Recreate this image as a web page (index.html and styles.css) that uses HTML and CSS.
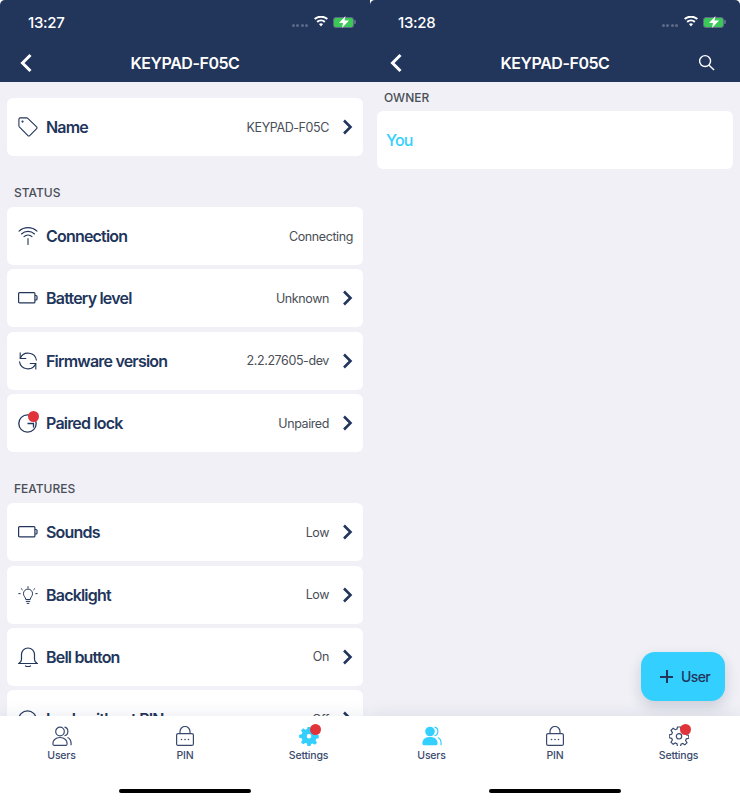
FILE: index.html
```html
<!DOCTYPE html>
<html lang="en">
<head>
    <meta charset="UTF-8">
    <meta name="viewport" content="width=device-width, initial-scale=1.0">
    <title>KEYPAD-F05C</title>
    <link rel="stylesheet" href="styles.css">
</head>
<body>

<svg class="sprite" width="0" height="0">
    <symbol id="chevron" viewBox="0 0 12 16"><path d="M3 1.500 9.500 8 3 14.500" fill="none" stroke="currentColor" stroke-width="2.600"/></symbol>
    <symbol id="back" viewBox="0 0 14 20"><path d="M11.500 2 3.500 10l8 8" fill="none" stroke="currentColor" stroke-width="3"/></symbol>
    <symbol id="search" viewBox="0 0 18 18"><g fill="none" stroke="currentColor" stroke-width="1.500"><circle cx="7.500" cy="7.500" r="5.800"/><path d="m11.800 11.800 5.200 5.200"/></g></symbol>
    <symbol id="wifi" viewBox="0 0 18 13"><path d="M9 13 6.400 9.800a4.200 4.200 0 0 1 5.200 0ZM4.900 8 3.200 6a9 9 0 0 1 11.600 0l-1.700 2a6.400 6.400 0 0 0-8.200 0ZM1.700 4.300 0 2.400a13.600 13.600 0 0 1 18 0l-1.700 1.900a11 11 0 0 0-14.600 0Z" fill="#fff"/></symbol>
    <symbol id="bolt" viewBox="0 0 12 12"><path d="M7.500 0 1 7h4l-1 5 7-7.500H6.500Z" fill="#fff"/></symbol>
    <symbol id="tag" viewBox="0 0 22 22"><g fill="none" stroke="currentColor" stroke-width="1.200"><path d="M1 2.500A1.500 1.500 0 0 1 2.500 1H9.500a2 2 0 0 1 1.300.500l9.700 9.300a1.400 1.400 0 0 1 0 2l-7.600 7.700a1.400 1.400 0 0 1-2 0L1.500 10.800A2 2 0 0 1 1 9.500Z"/><circle cx="5" cy="5" r=".600"/></g></symbol>
    <symbol id="antenna" viewBox="0 0 20 18"><g fill="none" stroke="currentColor" stroke-width="1.100" stroke-linecap="round"><path d="M1 4.200a13 13 0 0 1 18 0M3.500 7a9.300 9.300 0 0 1 13 0M6 9.700a5.500 5.500 0 0 1 8 0M10 11.500V17.500"/></g></symbol>
    <symbol id="battery" viewBox="0 0 20 12"><g fill="none" stroke="currentColor" stroke-width="1.200"><rect x=".600" y=".600" width="16.300" height="10.300" rx="1"/><path d="M17 3.500h1a1 1 0 0 1 1 1V7a1 1 0 0 1-1 1h-1"/></g></symbol>
    <symbol id="refresh" viewBox="0 0 20 20"><g fill="none" stroke="currentColor" stroke-width="1.200"><path d="M2.200 7.500A8.500 8.500 0 0 1 18.500 9.500M17.800 12.500A8.500 8.500 0 0 1 1.500 10.500"/><path d="M2.200 1.500v6h6M17.800 18.500v-6h-6" stroke-width="1.100"/></g></symbol>
    <symbol id="lock-dial" viewBox="0 0 20 20"><g fill="none" stroke="currentColor" stroke-width="1.300"><circle cx="9.500" cy="10.500" r="8.700"/><path d="M9.500 10.500h6v4"/></g></symbol>
    <symbol id="bulb" viewBox="0 0 22 20"><g fill="none" stroke="currentColor" stroke-width="1.100" stroke-linecap="round"><path d="M8.500 14.500c0-2-2.500-3-2.500-6a5 5 0 0 1 10 0c0 3-2.500 4-2.500 6ZM9 17h4M10 19.200h2M11 .800v1.500M3.500 3l1.200 1.100M18.500 3l-1.200 1.100M.800 8.500h1.700M19.500 8.500h1.700"/></g></symbol>
    <symbol id="bell" viewBox="0 0 20 20"><g fill="none" stroke="currentColor" stroke-width="1.200" stroke-linecap="round"><path d="M.800 16.500c1.500-1 2.700-2 2.700-4V7.500a6.500 6.500 0 0 1 13 0v5c0 2 1.200 3 2.700 4ZM7.500 19c1.500.800 3.500.800 5 0"/></g></symbol>
    <symbol id="users" viewBox="0 0 20 20"><g fill="none" stroke="currentColor" stroke-width="1.200"><circle cx="8" cy="5.500" r="4.300"/><path d="M1 18.500c-.600-4 2.500-7 7-7s7.600 3 7 7a1 1 0 0 1-1 .800H2a1 1 0 0 1-1-.800Z"/><path d="M12.500 1.200a4.300 4.300 0 0 1 0 8.400M15.500 11.500c2.500 1 4 3.500 3.500 7.800"/></g></symbol>
    <symbol id="users-on" viewBox="0 0 20 20"><g fill="#33cfff"><circle cx="8" cy="5.500" r="4.800"/><path d="M.500 18c-.600-4.500 2.700-7 7.500-7s8.100 2.500 7.500 7a1.400 1.400 0 0 1-1.400 1.300H1.900A1.400 1.400 0 0 1 .500 18Z"/></g><path d="M12.500 1.200a4.300 4.300 0 0 1 0 8.400M15.800 11.500c2.500 1 3.700 3.500 3.200 7.800" fill="none" stroke="#33cfff" stroke-width="1.200"/></symbol>
    <symbol id="pin" viewBox="0 0 18 20"><g fill="none" stroke="currentColor" stroke-width="1.200"><rect x=".600" y="7.600" width="16.800" height="11.800" rx="1.500"/><path d="M4 7.500V5.500a5 5 0 0 1 10 0v2"/></g><g fill="currentColor"><circle cx="5.500" cy="13.500" r=".800"/><circle cx="9" cy="13.500" r=".800"/><circle cx="12.500" cy="13.500" r=".800"/></g></symbol>
    <symbol id="gear" viewBox="0 0 20 20"><g fill="none" stroke="currentColor" stroke-width="1.200"><path d="M8.500 1h3l.500 2.500 1.700.700 2.200-1.400 2.100 2.100-1.400 2.200.700 1.700 2.500.500v3l-2.500.500-.700 1.700 1.400 2.200-2.100 2.100-2.200-1.400-1.700.700-.500 2.400h-3L8 17.600l-1.700-.700-2.200 1.400L2 16.200l1.400-2.200-.700-1.700L.200 11.800v-3l2.500-.500.700-1.700L2 4.400l2.100-2.100 2.200 1.400L8 3Z"/><circle cx="10" cy="10.300" r="2.700"/></g></symbol>
    <symbol id="gear-on" viewBox="0 0 20 20"><path fill-rule="evenodd" d="M8.500 1h3l.500 2.500 1.700.700 2.200-1.400 2.100 2.100-1.400 2.200.700 1.700 2.500.500v3l-2.500.500-.700 1.700 1.400 2.200-2.100 2.100-2.200-1.400-1.700.700-.500 2.400h-3L8 17.600l-1.700-.700-2.200 1.400L2 16.200l1.400-2.200-.700-1.700L.200 11.800v-3l2.500-.500.700-1.700L2 4.400l2.100-2.100 2.200 1.400L8 3Zm1.500 7a2.300 2.300 0 1 0 0 4.600 2.300 2.300 0 0 0 0-4.600Z" fill="#33cfff"/></symbol>
</svg>

<div class="screens">

    <!-- settings -->
    <section class="phone phone-left">
        <header class="topbar">
            <div class="status">
                <span class="clock">13:27</span>
                <div class="status-icons">
                    <span class="signal"><i></i><i></i><i></i><i></i></span>
                    <svg class="wifi"><use href="#wifi"/></svg>
                    <span class="cell"><svg class="bolt"><use href="#bolt"/></svg></span>
                </div>
            </div>
            <div class="navbar">
                <svg class="back"><use href="#back"/></svg>
                <h1>KEYPAD-F05C</h1>
            </div>
        </header>

        <main class="content settings">
            <div class="row first-row">
                <svg class="row-icon"><use href="#tag"/></svg>
                <span class="row-name">Name</span>
                <span class="row-value">KEYPAD-F05C</span>
                <svg class="chevron"><use href="#chevron"/></svg>
            </div>

            <h2 class="group">STATUS</h2>
            <div class="row">
                <svg class="row-icon"><use href="#antenna"/></svg>
                <span class="row-name">Connection</span>
                <span class="row-value">Connecting</span>
            </div>
            <div class="row">
                <svg class="row-icon"><use href="#battery"/></svg>
                <span class="row-name">Battery level</span>
                <span class="row-value">Unknown</span>
                <svg class="chevron"><use href="#chevron"/></svg>
            </div>
            <div class="row">
                <svg class="row-icon"><use href="#refresh"/></svg>
                <span class="row-name">Firmware version</span>
                <span class="row-value">2.2.27605-dev</span>
                <svg class="chevron"><use href="#chevron"/></svg>
            </div>
            <div class="row">
                <svg class="row-icon"><use href="#lock-dial"/></svg>
                <span class="dot row-dot"></span>
                <span class="row-name">Paired lock</span>
                <span class="row-value">Unpaired</span>
                <svg class="chevron"><use href="#chevron"/></svg>
            </div>

            <h2 class="group features">FEATURES</h2>
            <div class="row">
                <svg class="row-icon"><use href="#battery"/></svg>
                <span class="row-name">Sounds</span>
                <span class="row-value">Low</span>
                <svg class="chevron"><use href="#chevron"/></svg>
            </div>
            <div class="row">
                <svg class="row-icon"><use href="#bulb"/></svg>
                <span class="row-name">Backlight</span>
                <span class="row-value">Low</span>
                <svg class="chevron"><use href="#chevron"/></svg>
            </div>
            <div class="row">
                <svg class="row-icon"><use href="#bell"/></svg>
                <span class="row-name">Bell button</span>
                <span class="row-value">On</span>
                <svg class="chevron"><use href="#chevron"/></svg>
            </div>
            <div class="row">
                <svg class="row-icon"><use href="#lock-dial"/></svg>
                <span class="row-name">Lock without PIN</span>
                <span class="row-value">Off</span>
                <svg class="chevron"><use href="#chevron"/></svg>
            </div>
        </main>

        <nav class="tabbar">
            <div class="tab"><svg class="tab-icon"><use href="#users"/></svg>Users</div>
            <div class="tab"><svg class="tab-icon"><use href="#pin"/></svg>PIN</div>
            <div class="tab"><span class="tab-wrap"><svg class="tab-icon"><use href="#gear-on"/></svg><span class="dot tab-dot"></span></span>Settings</div>
        </nav>
        <div class="home-bar"></div>
    </section>

    <!-- users -->
    <section class="phone">
        <header class="topbar">
            <div class="status">
                <span class="clock">13:28</span>
                <div class="status-icons">
                    <span class="signal"><i></i><i></i><i></i><i></i></span>
                    <svg class="wifi"><use href="#wifi"/></svg>
                    <span class="cell"><svg class="bolt"><use href="#bolt"/></svg></span>
                </div>
            </div>
            <div class="navbar">
                <svg class="back"><use href="#back"/></svg>
                <h1>KEYPAD-F05C</h1>
                <svg class="search"><use href="#search"/></svg>
            </div>
        </header>

        <main class="content owners">
            <h2 class="group owner-title">OWNER</h2>
            <div class="row owner-row">You</div>
        </main>

        <button class="fab"><span class="plus"></span>User</button>

        <nav class="tabbar">
            <div class="tab"><svg class="tab-icon"><use href="#users-on"/></svg>Users</div>
            <div class="tab"><svg class="tab-icon"><use href="#pin"/></svg>PIN</div>
            <div class="tab"><span class="tab-wrap"><svg class="tab-icon"><use href="#gear"/></svg><span class="dot tab-dot"></span></span>Settings</div>
        </nav>
        <div class="home-bar"></div>
    </section>

</div>

</body>
</html>
```

FILE: styles.css
```css
* {
    box-sizing: border-box;
}
body {
    margin: 0;
    background-color: #fff;
    font-family: Inter, "Noto Sans", sans-serif;
    color: #22355b;
}
.sprite {
    display: block;
}
.screens {
    display: flex;
    width: 740px;
    height: 800px;
    overflow: hidden;
}
.phone {
    position: relative;
    display: flex;
    flex-direction: column;
    width: 370px;
    height: 800px;
    background-color: #f0f0f6;
    border-radius: 5px 5px 0 0;
    overflow: hidden;
}
.phone-left {
    border-radius: 5px 0 0 0;
}

/* top bar */
.topbar {
    flex: none;
    height: 82px;
    background-color: #22355b;
    color: #fff;
}
.status {
    display: flex;
    align-items: center;
    justify-content: space-between;
    height: 44px;
    padding: 0 15px 0 28px;
}
.clock {
    font-size: 15px;
    font-weight: 500;
    letter-spacing: -0.3px;
}
.status-icons {
    display: flex;
    align-items: center;
    gap: 5px;
}
.signal {
    display: flex;
    gap: 1.5px;
    margin-top: 6px;
    margin-right: 1px;
}
.signal i {
    width: 3px;
    height: 3px;
    border-radius: 50%;
    background-color: #5d6a87;
}
.wifi {
    width: 14px;
    height: 11px;
    margin-bottom: 1px;
}
.cell {
    position: relative;
    display: flex;
    align-items: center;
    justify-content: center;
    width: 21px;
    height: 11px;
    margin-right: 1px;
    background-color: #3bc858;
    border: 1px solid #5d6a87;
    border-radius: 3px;
}
.cell::after {
    content: "";
    position: absolute;
    right: -3px;
    width: 2px;
    height: 4px;
    background-color: #5d6a87;
    border-radius: 0 1px 1px 0;
}
.bolt {
    width: 12px;
    height: 12px;
}
.navbar {
    position: relative;
    display: flex;
    align-items: center;
    justify-content: center;
    height: 38px;
}
.navbar h1 {
    margin: 0;
    font-size: 16px;
    font-weight: 600;
    letter-spacing: -0.45px;
}
.back {
    position: absolute;
    left: 19px;
    top: 9px;
    width: 14px;
    height: 20px;
}
.search {
    position: absolute;
    right: 25px;
    top: 10px;
    width: 17px;
    height: 17px;
}

/* list */
.content {
    flex: 1;
    min-height: 0;
    overflow: hidden;
    padding: 0 7px;
}
.settings {
    padding-top: 16px;
}
.row {
    position: relative;
    display: flex;
    align-items: center;
    height: 58px;
    margin-bottom: 4.4px;
    padding: 0 10px 0 11px;
    background-color: #fff;
    border-radius: 6px;
}
.row-icon {
    flex: none;
    width: 20px;
    height: 20px;
    margin-right: 8px;
}
.row-name {
    font-size: 16px;
    font-weight: 600;
    letter-spacing: -0.8px;
}
.row-value {
    margin-left: auto;
    font-size: 12.5px;
    letter-spacing: -0.4px;
    color: #4a4e57;
}
.chevron {
    flex: none;
    width: 12px;
    height: 16px;
    margin-left: 12px;
}
.dot {
    position: absolute;
    width: 11px;
    height: 11px;
    border-radius: 50%;
    background-color: #e1343a;
}
.row-dot {
    left: 21px;
    top: 17px;
}
.group {
    height: 51px;
    margin: 0;
    padding: 29px 0 0 7px;
    font-size: 12px;
    font-weight: 500;
    line-height: 15px;
    color: #4a4e57;
}
.first-row {
    margin-bottom: 0;
}
.features {
    height: 46.6px;
    padding-top: 24.6px;
}
.owner-title {
    height: 29px;
    padding-top: 8px;
}
.owner-row {
    padding-left: 9px;
    font-size: 16px;
    font-weight: 500;
    letter-spacing: -0.8px;
    color: #33cfff;
}

/* floating button */
.fab {
    position: absolute;
    right: 15px;
    top: 652px;
    display: flex;
    align-items: center;
    width: 84px;
    height: 49px;
    padding: 0 0 0 19px;
    background-color: #33cfff;
    border: none;
    border-radius: 14px;
    box-shadow: 0 6px 14px rgba(34, 53, 91, 0.18);
    font-family: inherit;
    font-size: 14px;
    font-weight: 500;
    letter-spacing: -0.6px;
    color: #22355b;
}
.plus {
    position: relative;
    width: 13px;
    height: 13px;
    margin-right: 8px;
}
.plus::before, .plus::after {
    content: "";
    position: absolute;
    background-color: #22355b;
}
.plus::before {
    left: 0;
    top: 5.5px;
    width: 13px;
    height: 2px;
}
.plus::after {
    left: 5.5px;
    top: 0;
    width: 2px;
    height: 13px;
}

/* bottom tabs */
.tabbar {
    flex: none;
    display: grid;
    grid-template-columns: 123px 124px 123px;
    height: 84px;
    padding-top: 10px;
    align-items: start;
    background-color: #fff;
    box-shadow: 0 0 16px rgba(34, 53, 91, 0.1);
    z-index: 1;
}
.tab {
    display: flex;
    flex-direction: column;
    align-items: center;
    font-size: 10.5px;
    font-weight: 500;
    letter-spacing: -0.2px;
    line-height: 13px;
    color: #3a4a6e;
}
.tab-wrap {
    position: relative;
    display: flex;
}
.tab-icon {
    display: block;
    width: 20px;
    height: 20px;
    margin-bottom: 3px;
}
.tab-dot {
    right: -2px;
    top: -2px;
}
.home-bar {
    position: absolute;
    left: 119px;
    bottom: 7px;
    width: 132px;
    height: 4px;
    background-color: #000;
    border-radius: 2px;
    z-index: 2;
}
```
